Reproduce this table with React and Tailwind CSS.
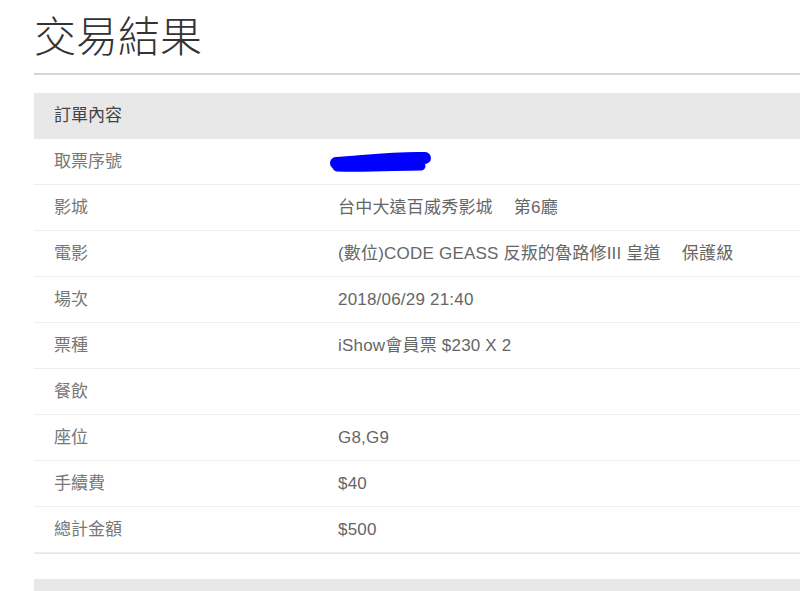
import React from 'react';

const rows = [
  { label: '取票序號', value: null },
  { label: '影城', value: ['台中大遠百威秀影城', '第6廳'] },
  { label: '電影', value: ['(數位)CODE GEASS 反叛的魯路修III 皇道', '保護級'] },
  { label: '場次', value: '2018/06/29 21:40' },
  { label: '票種', value: 'iShow會員票 $230 X 2' },
  { label: '餐飲', value: '' },
  { label: '座位', value: 'G8,G9' },
  { label: '手續費', value: '$40' },
  { label: '總計金額', value: '$500' },
];

// redacted ticket number — hand-drawn blue marker
const Scribble = () => (
  <svg width="104" height="26" viewBox="0 0 104 26" className="block">
    <path
      d="M7 14 C 30 13, 62 8, 96 9"
      stroke="#0000ff"
      strokeWidth="12"
      strokeLinecap="round"
      fill="none"
    />
    <path
      d="M8 18 C 40 19, 70 17, 92 17"
      stroke="#0000ff"
      strokeWidth="9"
      strokeLinecap="round"
      fill="none"
    />
  </svg>
);

const Value = ({ value }) => {
  if (value === null)
    return (
      <div className="-ml-[9px]">
        <Scribble />
      </div>
    );
  if (Array.isArray(value))
    return (
      <>
        <span>{value[0]}</span>
        <span className="ml-[21px]">{value[1]}</span>
      </>
    );
  return value;
};

const App = () => {
  return (
    <div
      className="w-full h-[591px] overflow-hidden bg-white pl-[34px]"
      style={{ fontFamily: '"Liberation Sans", "Noto Sans CJK TC", sans-serif' }}
    >
      <h1
        className="pt-[12px] h-[73px] text-[42px] leading-[52px] text-[#333] font-light"
        style={{ fontFamily: '"Liberation Serif", "Noto Sans CJK TC", serif' }}
      >
        交易結果
      </h1>
      <div className="h-[2px] bg-[#d6d6d6]" />

      <div className="mt-[18px]">
        <div className="h-[46px] bg-[#e8e8e8] flex items-center pl-5 text-[17px] text-[#444]">
          訂單內容
        </div>
        {rows.map((r) => (
          <div
            key={r.label}
            className="h-[46px] flex items-center border-b border-[#eeeeee] text-[17px]"
          >
            <div className="w-[284px] pl-5 text-[#777]">{r.label}</div>
            <div className="pl-5 text-[#666] whitespace-nowrap tracking-[0.2px]">
              <Value value={r.value} />
            </div>
          </div>
        ))}
        <div className="h-[1px] bg-[#e6e6e6]" />
      </div>

      <div className="mt-[25px] h-[20px] bg-[#e8e8e8]" />
    </div>
  );
};

export default App;
